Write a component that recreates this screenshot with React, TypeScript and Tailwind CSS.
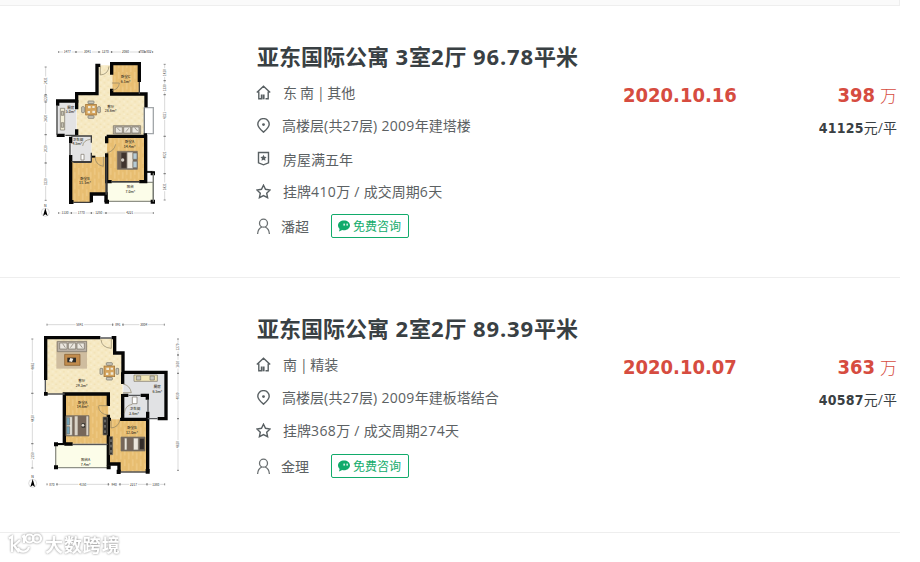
import type { ReactNode } from "react";

type IconName = "home" | "pin" | "badge" | "star";

interface Listing {
  title: string;
  details: { icon: IconName; text: string }[];
  agent: string;
  date: string;
  total: string;
  unit: string;
}

const listings: Listing[] = [
  {
    title: "亚东国际公寓 3室2厅 96.78平米",
    details: [
      { icon: "home", text: "东 南 | 其他" },
      { icon: "pin", text: "高楼层(共27层) 2009年建塔楼" },
      { icon: "badge", text: "房屋满五年" },
      { icon: "star", text: "挂牌410万 / 成交周期6天" },
    ],
    agent: "潘超",
    date: "2020.10.16",
    total: "398",
    unit: "41125",
  },
  {
    title: "亚东国际公寓 2室2厅 89.39平米",
    details: [
      { icon: "home", text: "南 | 精装" },
      { icon: "pin", text: "高楼层(共27层) 2009年建板塔结合" },
      { icon: "star", text: "挂牌368万 / 成交周期274天" },
    ],
    agent: "金理",
    date: "2020.10.07",
    total: "363",
    unit: "40587",
  },
];

// Tracking of the Latin runs, and offset of the text, per kind of row
const rowStyles: Record<IconName, { latin: string; text: string }> = {
  home: { latin: "tracking-[-0.6px]", text: "pl-px" },
  pin: { latin: "tracking-[0.3px]", text: "" },
  badge: { latin: "", text: "pl-px pt-px" },
  star: { latin: "tracking-[0.4px]", text: "pl-px" },
};

// Latin runs take their own tracking next to the Chinese text
function Mixed({ text, latin }: { text: string; latin: string }) {
  return (
    <>
      {text.split(/([\x20-\x7e]+)/).map((part, i) =>
        i % 2 ? (
          <span key={i} className={latin}>
            {part}
          </span>
        ) : (
          part
        )
      )}
    </>
  );
}

const iconPaths: Record<IconName, ReactNode> = {
  home: (
    <>
      <path d="M.8 7.6 7.500 1.200 14.200 7.600M2.800 6.400v7.300h2.700V9.500M12.200 6.400v7.300H9.500" />
      <path d="M7.500 9.500v4.800" strokeWidth="2.200" />
    </>
  ),
  pin: (
    <>
      <path d="M7.500 14.100C4.200 11.400 1.800 9.300 1.800 6.300a5.700 5.700 0 0 1 11.400 0c0 3-2.400 5.100-5.700 7.800Z" />
      <circle cx="7.500" cy="6.600" r="1.400" fill="#596063" stroke="none" />
    </>
  ),
  badge: (
    <>
      <path d="M2.500 1.500h10v10.300l-5 2-5-2Z" />
      <path
        d="m7.500 3.700 1 2 2.100.3-1.500 1.600.4 2.200-2-1-2 1 .4-2.200L4.400 6l2.100-.3Z"
        fill="#596063"
        stroke="none"
      />
    </>
  ),
  star: (
    <path d="m7.500 1.200 2 4.100 4.600.7-3.400 3.200.9 4.500-4.100-2.100-4.100 2.100.9-4.500L.9 6l4.600-.7Z" />
  ),
};

function Icon({ name }: { name: IconName }) {
  return (
    <svg
      width="15"
      height="15"
      viewBox="0 0 15 15"
      fill="none"
      stroke="#596063"
      strokeWidth="1.400"
      className="-ml-px shrink-0"
    >
      {iconPaths[name]}
    </svg>
  );
}

function AgentIcon() {
  return (
    <svg
      width="15"
      height="17"
      viewBox="0 0 15 17"
      fill="none"
      stroke="#6b7072"
      strokeWidth="1.300"
      className="-ml-px"
    >
      <circle cx="7.500" cy="5.200" r="4" />
      <path d="M1.600 16c.2-3.800 2-6 4.200-7M13.400 16c-.2-3.800-2-6-4.200-7" />
    </svg>
  );
}

function ConsultButton() {
  return (
    <button className="flex h-6 w-[78px] items-center gap-[3px] rounded-[2px] border border-[#12ab6b] bg-white pl-[6px] text-[12px] text-[#12ab6b]">
      <svg width="12" height="12" viewBox="0 0 12 12" className="shrink-0">
        <path
          d="M6 .4c3.400 0 6 2.100 6 4.900s-2.600 5-6 5c-.6 0-1.300-.1-1.800-.2L1 11.600l.6-2.700C.6 8 0 6.800 0 5.300 0 2.500 2.600.4 6 .4Z"
          fill="#12ab6b"
        />
        <rect x="5.500" y="3.600" width="1.300" height="2" fill="#fff" />
        <rect x="8.500" y="3.600" width="1.300" height="2" fill="#fff" />
      </svg>
      <span className="translate-y-px whitespace-nowrap">免费咨询</span>
    </button>
  );
}

type Label = [number, number, string];

function RoomLabels({ items }: { items: Label[] }) {
  return (
    <g fill="#2f2a20" fontSize="10.500" fontWeight="500" textAnchor="middle">
      {items.map(([x, y, t], i) => (
        <text key={i} x={x} y={y}>
          {t}
        </text>
      ))}
    </g>
  );
}

// Horizontal dimension line, broken by its figures
function DimRow({ y, ticks, labels }: { y: number; ticks: number[]; labels: string[] }) {
  return (
    <g>
      {labels.map((label, i) => {
        const a = ticks[i];
        const b = ticks[i + 1];
        const mid = (a + b) / 2;
        return (
          <g key={i}>
            <path
              d={`M${a} ${y}H${Math.max(a, mid - 13)}M${Math.min(b, mid + 13)} ${y}H${b}`}
              stroke="#b5b5b5"
              strokeWidth="1.500"
            />
            <path d={`M${a} ${y - 3}v6M${b} ${y - 3}v6`} stroke="#777" strokeWidth="2.500" />
            <text x={mid} y={y + 4} fontSize="9.500" fill="#333" textAnchor="middle">
              {label}
            </text>
          </g>
        );
      })}
    </g>
  );
}

// Vertical dimension line, figures read from bottom to top
function DimColumn({ x, ticks, labels }: { x: number; ticks: number[]; labels: string[] }) {
  return (
    <g>
      {labels.map((label, i) => {
        const a = ticks[i];
        const b = ticks[i + 1];
        const mid = (a + b) / 2;
        return (
          <g key={i}>
            <path
              d={`M${x} ${a}V${Math.max(a, mid - 13)}M${x} ${Math.min(b, mid + 13)}V${b}`}
              stroke="#b5b5b5"
              strokeWidth="1.500"
            />
            <path d={`M${x - 3} ${a}h6M${x - 3} ${b}h6`} stroke="#777" strokeWidth="2.500" />
            <text
              transform={`translate(${x + 4} ${mid}) rotate(-90)`}
              fontSize="9.500"
              fill="#333"
              textAnchor="middle"
            >
              {label}
            </text>
          </g>
        );
      })}
    </g>
  );
}

function Compass({ x, y }: { x: number; y: number }) {
  return (
    <g transform={`translate(${x} ${y})`}>
      <circle r="12" fill="none" stroke="#bbb" strokeWidth="1.500" />
      <path d="M0-13 7 11 0 6-7 11Z" fill="#000" />
      <text y="-15" fontSize="11" fill="#222" textAnchor="middle">
        N
      </text>
    </g>
  );
}

function DiningTable({ x, y }: { x: number; y: number }) {
  return (
    <g transform={`translate(${x} ${y})`} stroke="#6b6a63" strokeWidth="2">
      <g fill="#c9c6b8">
        <rect x="-9" y="-26" width="18" height="8" rx="2" />
        <rect x="-9" y="18" width="18" height="8" rx="2" />
        <rect x="-28" y="-9" width="8" height="18" rx="2" />
        <rect x="20" y="-9" width="8" height="18" rx="2" />
      </g>
      <rect x="-16" y="-16" width="32" height="32" fill="#d3a35d" stroke="#9b6d30" />
      <path d="M-9-11h8v7h-8ZM4 3h8v7H4ZM4-11h7v6H4ZM-10 4h7v7h-7Z" fill="#eee9d8" stroke="none" />
    </g>
  );
}

function PlanDefs({ id }: { id: string }) {
  return (
    <defs>
      <pattern id={`${id}-wood`} width="24" height="32" patternUnits="userSpaceOnUse">
        <rect width="24" height="32" fill="#e9bf73" />
        <path d="M0 0h6v20H0ZM12 12h6v20h-6Z" fill="#edc781" />
        <path d="M6 0v32M18 0v32" stroke="#dfb060" strokeWidth="1" />
      </pattern>
      <pattern id={`${id}-tile`} width="23" height="19" patternUnits="userSpaceOnUse">
        <rect width="23" height="19" fill="#f6e9c3" />
        <path d="M2 4h5v4H2ZM14 12h5v4h-5Z" fill="#f1e0b1" />
        <path d="M13 2h5v5h-5ZM4 12h5v4H4Z" fill="#f9f0d2" />
      </pattern>
    </defs>
  );
}

function ThreeRoomPlan() {
  return (
    <svg width="160" height="180" viewBox="0 0 480 540" fontFamily="'Noto Sans CJK SC', sans-serif">
      <PlanDefs id="three" />
      <path d="M205 76h41v86h100v124H232v82h-48v-80h-44V165h65Z" fill="url(#three-tile)" />
      <path d="M247 74h82v88h-82ZM231 288h115v137H231ZM124 351h105v111h-44v25h-61Z" fill="url(#three-wood)" />
      <path d="M83 184h56v100H83ZM124 288h60v77h-60Z" fill="#e3e3e4" />
      <path d="M232 427h138v57H232Z" fill="#fcfde9" stroke="#8f9187" strokeWidth="4" />
      <path d="M346 394h24v33" fill="none" stroke="#8f9187" strokeWidth="3" />
      <path d="M343 203h27v78h-27Z" fill="#fff" stroke="#a3a7aa" strokeWidth="4" />
      <path d="M343 203v78" stroke="#70767a" strokeWidth="3" />
      <g fill="none" stroke="#050505" strokeWidth="10">
        <path d="M211 76h-10v85h-61v22H83v14" />
        <path d="M245 104V71h83v55M245 146v16h103v40" />
        <path d="M140 180v28M140 268v18M346 280v9M230 289h117v107M230 289v21M230 340v85h15M328 425h19v-50M122 290v20M122 345v22M122 367v119h8M184 487v-25h44v25M80 286h24" />
      </g>
      <path d="M229 352v112M130 366h54" stroke="#3d3d3d" strokeWidth="6" />
      <path d="M184 350h12" stroke="#050505" strokeWidth="6" />
      <g fill="none" stroke="#3d3d3d" strokeWidth="4">
        <path d="M328 126v36M81 197v87M106 286h34M120 310v36M124 288h60v20M184 338v27h-60M130 487h54M244 425h86" />
      </g>
      <path d="M362 394h13v12h-13ZM362 479h13v12h-13ZM117 480h13v12h-13ZM224 479h13v12h-13Z" fill="#050505" />
      <path d="M346 396h20" stroke="#050505" strokeWidth="5" />
      <path d="M370 400v85" stroke="#777a74" strokeWidth="4" />
      <g fill="none" stroke="#8b8064" strokeWidth="2">
        <path d="M211 79v26q24-2 26-26M246 129h22q-2 20-22 22M158 318q2-18 24-20M230 338q22-3 27-25M195 352q2 23 25 27v-29" />
      </g>
      <g stroke="#777064" strokeWidth="2">
        <path d="M91 205h13v65H91Z" fill="#f2edd6" />
        <path d="M94 214h7v12h-7ZM94 248h7v14h-7Z" fill="#c4c1b3" />
        <path d="M250 257h82v25h-82Z" fill="#b7b0a4" />
        <path d="M256 261h21v18h-21ZM281 261h21v18h-21ZM306 261h21v18h-21Z" fill="#e9e6df" />
        <path d="M261 263l10 10M288 275l8-10M314 263l9 10" />
        <path d="M262 334h60v54h-60Z" fill="#766659" />
        <path d="M273 337h18v48h-18Z" fill="#40342d" />
        <path d="M291 336h18v50h-18Z" fill="#ece5d8" />
        <path d="M309 339h12v19h-12ZM309 364h12v19h-12Z" fill="#b5cad4" />
        <path d="M153 343h9v17h-9Z" fill="#fff" />
      </g>
      <circle cx="278" cy="360" r="5" fill="#d4cdc2" />
      <DiningTable x={183} y={209} />
      <RoomLabels
        items={[
          [287, 115, "卧室C"], [287, 129, "6.1m²"], [122, 206, "厨房"], [122, 220, "5.0m²"],
          [242, 203, "客厅"], [242, 217, "28.6m²"], [144, 302, "卫生间"], [142, 316, "4.5m²"],
          [299, 310, "卧室A"], [299, 324, "14.4m²"], [165, 419, "卧室B"], [165, 433, "11.1m²"],
          [301, 445, "阳台"], [301, 459, "7.0m²"],
        ]}
      />
      <DimRow y={36} ticks={[86, 138, 207, 245, 328, 345, 368]} labels={["1477", "3041", "1270", "2060", "700", "802"]} />
      <DimRow y={519} ticks={[86, 124, 184, 228, 370]} labels={["1130", "1770", "1250", "4221"]} />
      <DimColumn x={47} ticks={[81, 164, 186, 284, 369, 481]} labels={["2421", "1220", "2820", "2020", "3220"]} />
      <DimColumn x={404} ticks={[73, 122, 164, 289, 401, 480]} labels={["1420", "1330", "4321", "4021", "1821"]} />
      <Compass x={46} y={517} />
    </svg>
  );
}

function TwoRoomPlan() {
  return (
    <svg width="180" height="180" viewBox="0 0 540 540" fontFamily="'Noto Sans CJK SC', sans-serif">
      <PlanDefs id="two" />
      <path d="M78 85h204v48h26v195h-43v-75H78Z" fill="url(#two-tile)" />
      <path d="M134 253h131v148H134ZM266 328h117v159h-87v-25h-30Z" fill="url(#two-wood)" />
      <path d="M310 189h126v137h-54v-70h-72ZM308 257h74v70h-74Z" fill="#e1e2e4" />
      <path d="M107 404h157v69H107Z" fill="#fcfde9" stroke="#8f9187" strokeWidth="4" />
      <g fill="none" stroke="#050505" strokeWidth="10">
        <path d="M77 210V83h164M275 83h9v46h25v58h129v139h-25" />
        <path d="M308 187v35M308 252v72M308 256h17M362 256h20v13M383 305v182M133 402V252h132v36M265 314v148h32v23M266 328h7M300 328h83M133 402h25" />
      </g>
      <g fill="none" stroke="#55575a" strokeWidth="4">
        <path d="M76 210v42h58M241 84h35M325 256h37M384 270v36M300 486h83M158 403h105M383 326h30" />
      </g>
      <path d="M72 246h11v11H72ZM102 397h12v12h-12ZM102 466h12v12h-12ZM260 466h12v12h-12ZM290 479h12v13h-12ZM377 477h12v14h-12Z" fill="#050505" />
      <path d="M108 402h26" stroke="#050505" strokeWidth="6" />
      <g fill="none" stroke="#8b8064" strokeWidth="2">
        <path d="M243 89q2 24 31 26V87M309 222q21 4 25 26h-25M236 287h27M235 289q3 23 28 26M273 329v25q23-2 27-25M313 310q2-24 24-27" />
      </g>
      <g stroke="#777064" strokeWidth="2">
        <path d="M109 94h92v82h-92Z" fill="#cfbd9f" stroke="none" />
        <path d="M112 94h88v31h-88Z" fill="#b9b0a5" />
        <path d="M119 99h22v18h-22ZM145 99h22v18h-22ZM171 99h22v18h-22Z" fill="#ebe7df" />
        <path d="M128 101l8 12M151 113l9-12M178 101l9 12" />
        <path d="M134 133h46v33h-46Z" fill="#c28c4d" stroke="#82592b" />
        <path d="M142 143h26v14h-26Z" fill="#2b2a27" stroke="none" />
        <path d="m151 144 9 2-4 10-9-2Z" fill="#efece4" stroke="none" />
        <path d="M342 195h70v19h-70Z" fill="#f1e6b6" />
        <path d="M349 198h13v12h-13ZM390 198h13v12h-13Z" fill="#c7c7c3" />
        <path d="M138 317h69v61h-69Z" fill="#766659" />
        <path d="M139 320h18v56h-18Z" fill="#e6e2d8" />
        <path d="M140 323h9v22h-9ZM140 350h9v22h-9Z" fill="#73a5bc" />
        <path d="M164 319h9v57h-9ZM199 319h6v57h-6Z" fill="#d9d2c6" stroke="none" />
        <path d="M184 339h12v15h-12Z" fill="#2d2724" />
        <path d="M303 381h72v42h-72Z" fill="#766659" />
        <path d="M313 384h8v36h-8ZM340 384h15v36h-15Z" fill="#ebe5db" />
        <path d="M358 385h15v34h-15Z" fill="#322c29" />
        <path d="M249 321h13v54h-13ZM268 380h10v54h-10Z" fill="#302f2e" />
        <path d="M337 261h14v20h-14Z" fill="#fff" />
      </g>
      <path d="M255 329v8M255 345v8M255 361v8M273 388v8M273 404v8M273 420v8" stroke="#9a9a95" strokeWidth="3" />
      <circle cx="189" cy="346" r="4" fill="#e5dfd4" />
      <DiningTable x={268} y={184} />
      <RoomLabels
        items={[
          [185, 216, "客厅"], [185, 230, "29.3m²"], [412, 234, "厨房"], [412, 248, "6.5m²"],
          [188, 281, "卧室A"], [188, 295, "14.6m²"], [345, 301, "卫生间"], [342, 315, "3.6m²"],
          [336, 358, "卧室B"], [336, 372, "12.0m²"], [197, 454, "阳台A"], [197, 468, "7.4m²"],
        ]}
      />
      <DimRow y={44} ticks={[81, 278, 309, 433]} labels={["5841", "891", "3004"]} />
      <DimRow y={523} ticks={[81, 111, 265, 300, 381, 434]} labels={["870", "4150", "940", "2217", "1380"]} />
      <DimColumn x={37} ticks={[87, 250, 401, 474]} labels={["4862", "4420", "2150"]} />
      <DimColumn x={474} ticks={[87, 135, 190, 326, 481]} labels={["1270", "1610", "4030", "4620"]} />
      <Compass x={38} y={520} />
    </svg>
  );
}

interface ListingRowProps {
  item: Listing;
  children: ReactNode;
  className: string;
  agentClassName: string;
}

function ListingRow({ item, children, className, agentClassName }: ListingRowProps) {
  return (
    <article className={`flex w-[900px] border-b border-[#eeeeee] ${className}`}>
      <div className="w-[257px] shrink-0">{children}</div>
      <div className="w-[366px] shrink-0 pt-[34px]">
        <h2 className="h-8 whitespace-nowrap text-[22px] leading-8 font-bold text-[#394043]">
          <Mixed text={item.title} latin="tracking-[0.85px]" />
        </h2>
        <ul className="pt-[4px]">
          {item.details.map((d) => (
            <li key={d.icon} className="flex h-[33px] items-center gap-[11px] text-[14px] text-[#5c6163]">
              <Icon name={d.icon} />
              <span className={`whitespace-nowrap ${rowStyles[d.icon].text}`}>
                <Mixed text={d.text} latin={rowStyles[d.icon].latin} />
              </span>
            </li>
          ))}
        </ul>
        <div className={`flex items-center text-[14px] text-[#5c6163] ${agentClassName}`}>
          <AgentIcon />
          <span className="ml-[10px] w-[50px]">{item.agent}</span>
          <ConsultButton />
        </div>
      </div>
      <div className="flex flex-1 justify-between pt-[73px] pr-[3px] font-['DejaVu_Sans_Condensed','DejaVu_Sans','Noto_Sans_CJK_SC',sans-serif] font-stretch-condensed">
        <div className="h-8 text-[20px] leading-8 font-bold text-[#d64c40]">{item.date}</div>
        <div className="text-right">
          <div className="h-[33px] text-[20px] leading-8 font-bold text-[#d64c40]">
            {item.total}
            <span className="ml-[5px] font-['Noto_Sans_CJK_SC',sans-serif] text-[17px] font-light">万</span>
          </div>
          <div className="h-8 text-[14px] leading-8 font-bold text-[#394043]">
            <span className="tracking-[0.25px]">{item.unit}</span>
            <span className="font-['Open_Sans','Noto_Sans_CJK_SC',sans-serif] font-normal">元/平</span>
          </div>
        </div>
      </div>
    </article>
  );
}

function Watermark() {
  return (
    <div className="absolute top-[532px] left-[8px] flex items-center gap-[3px] drop-shadow-[0_0_1px_#888888]">
      <svg width="34" height="25" viewBox="0 0 34 25" fill="none" stroke="#fff" strokeWidth="2.200">
        <path d="M1 5.500 4 3.500V19M12 7 6 12.500l5 6.500M10 15c2 5 9 5 11-1M14 4l2-1v7" />
        <circle cx="21.500" cy="5.500" r="4" />
        <circle cx="29" cy="5.500" r="4" />
      </svg>
      <span className="text-[18px] leading-[26px] font-bold tracking-[0.9px] whitespace-nowrap text-white">大数跨境</span>
    </div>
  );
}

export default function App() {
  return (
    <main className="relative h-[562px] w-[920px] overflow-hidden bg-white font-['Open_Sans','Noto_Sans_CJK_SC',sans-serif]">
      <div className="h-[6px] w-[900px] border-r border-b border-[#eeeeee] bg-[#fafafa]" />
      <ListingRow item={listings[0]} className="h-[272px]" agentClassName="h-9">
        <div className="pt-[34px] pl-[30px]">
          <ThreeRoomPlan />
        </div>
      </ListingRow>
      <ListingRow item={listings[1]} className="h-[255px]" agentClassName="h-[38px]">
        <div className="pt-[32px] pl-[20px]">
          <TwoRoomPlan />
        </div>
      </ListingRow>
      <Watermark />
    </main>
  );
}
